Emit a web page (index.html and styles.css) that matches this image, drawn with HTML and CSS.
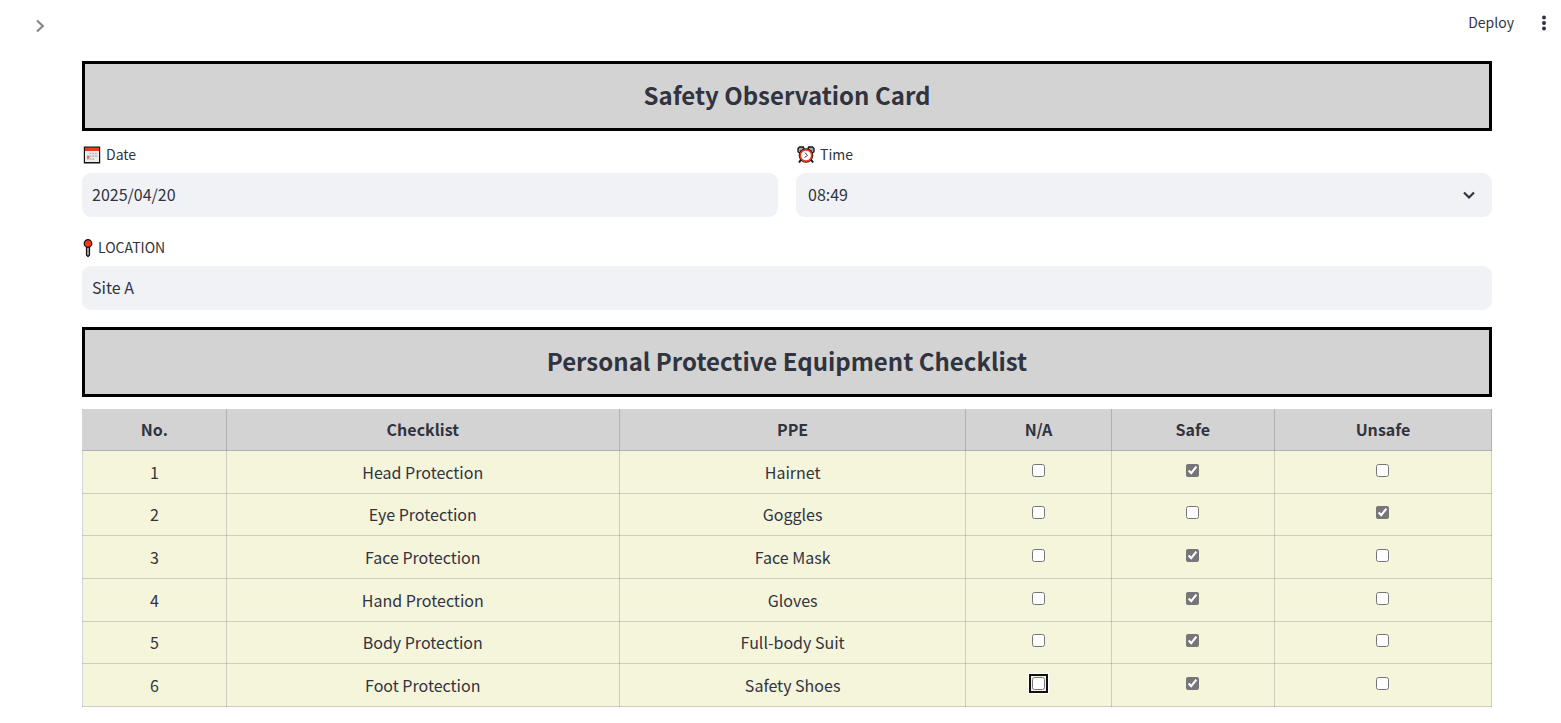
FILE: index.html
```html
<!DOCTYPE html>
<html lang="en">
<head>
<meta charset="utf-8">
<meta name="viewport" content="width=device-width, initial-scale=1">
<title>Safety Observation Card</title>
<link rel="stylesheet" href="styles.css">
</head>
<body>
<header class="topbar">
  <button class="icon-button expand" type="button" aria-label="Open sidebar">
    <svg width="20" height="20" viewBox="0 0 20 20" fill="none" stroke="#85868e" stroke-width="2.2"><path d="M7 4.500 12.800 10 7 15.500"/></svg>
  </button>
  <div class="toolbar">
    <button class="deploy" type="button">Deploy</button>
    <button class="icon-button" type="button" aria-label="Main menu">
      <svg width="20" height="20" viewBox="0 0 20 20" fill="#31333f"><circle cx="10" cy="4.500" r="2"/><circle cx="10" cy="10" r="2"/><circle cx="10" cy="15.500" r="2"/></svg>
    </button>
  </div>
</header>
<main class="page">
  <h1 class="banner">Safety Observation Card</h1>
  <div class="fields">
    <div class="field">
      <label class="label" for="date">
        <svg width="20" height="20" viewBox="0 0 20 20"><path fill="#fff" stroke="#111" stroke-width="1.400" d="M2.500 2.200h15v15.500h-15z"/><path fill="#f03a17" d="M3 2.500h14V6H3z"/><path fill="#ededf0" d="M3 6h14v11H3z"/><path stroke="#b5b5b8" stroke-width="1.700" stroke-dasharray="1.700 1" d="M7.500 8.500H16M5 11.200h11M5 14h8"/><path fill="#ee6a50" d="M5 11h2.500v2.500H5z"/></svg>
        <span class="label-text">Date</span>
      </label>
      <input class="control" id="date" type="text" value="2025/04/20">
    </div>
    <div class="field">
      <label class="label" for="time">
        <svg width="20" height="20" viewBox="0 0 20 20"><path fill="#aaa" stroke="#111" stroke-width="1.300" stroke-linejoin="round" d="M2 7V3.500L3.500 2h4L8 4 4.500 8zM18 7V3.500L16.500 2h-4L12 4l3.500 4z"/><path stroke="#111" stroke-width="2" d="m5.500 14-2.500 3.500M14.500 14l2.500 3.500"/><circle cx="10" cy="10.500" r="7.300" fill="#111"/><circle cx="10" cy="10.500" r="5.700" fill="#fff" stroke="#e63c1e" stroke-width="1.700"/><path fill="none" stroke="#444" d="m9 7.500 2.500 3-3 2"/></svg>
        <span class="label-text">Time</span>
      </label>
      <div class="select-wrap">
        <select class="control select" id="time"><option>08:49</option></select>
        <svg class="chevron" width="20" height="20" viewBox="0 0 20 20" fill="none" stroke="#31333f" stroke-width="2.200"><path d="m5 7.500 5 5 5-5"/></svg>
      </div>
    </div>
    <div class="field wide">
      <label class="label" for="location">
        <svg width="12" height="20" viewBox="0 0 12 20"><path fill="#aaa" stroke="#111" stroke-width="1.200" stroke-linejoin="round" d="M4.500 8h3v9L6 18.500 4.500 17z"/><circle cx="6" cy="5.500" r="3.800" fill="#f03a17" stroke="#111" stroke-width="1.200"/></svg>
        <span class="label-text">LOCATION</span>
      </label>
      <input class="control" id="location" type="text" value="Site A">
    </div>
  </div>
  <h2 class="banner">Personal Protective Equipment Checklist</h2>
  <table class="checklist">
    <colgroup><col class="col-no"><col class="col-item"><col class="col-ppe"><col class="col-na"><col class="col-safe"><col class="col-unsafe"></colgroup>
    <thead>
      <tr><th>No.</th><th>Checklist</th><th>PPE</th><th>N/A</th><th>Safe</th><th>Unsafe</th></tr>
    </thead>
    <tbody>
      <tr><td>1</td><td>Head Protection</td><td>Hairnet</td><td><input class="tick" type="checkbox" aria-label="Head Protection N/A"></td><td><input class="tick" type="checkbox" aria-label="Head Protection safe" checked></td><td><input class="tick" type="checkbox" aria-label="Head Protection unsafe"></td></tr>
      <tr><td>2</td><td>Eye Protection</td><td>Goggles</td><td><input class="tick" type="checkbox" aria-label="Eye Protection N/A"></td><td><input class="tick" type="checkbox" aria-label="Eye Protection safe"></td><td><input class="tick" type="checkbox" aria-label="Eye Protection unsafe" checked></td></tr>
      <tr><td>3</td><td>Face Protection</td><td>Face Mask</td><td><input class="tick" type="checkbox" aria-label="Face Protection N/A"></td><td><input class="tick" type="checkbox" aria-label="Face Protection safe" checked></td><td><input class="tick" type="checkbox" aria-label="Face Protection unsafe"></td></tr>
      <tr><td>4</td><td>Hand Protection</td><td>Gloves</td><td><input class="tick" type="checkbox" aria-label="Hand Protection N/A"></td><td><input class="tick" type="checkbox" aria-label="Hand Protection safe" checked></td><td><input class="tick" type="checkbox" aria-label="Hand Protection unsafe"></td></tr>
      <tr><td>5</td><td>Body Protection</td><td>Full-body Suit</td><td><input class="tick" type="checkbox" aria-label="Body Protection N/A"></td><td><input class="tick" type="checkbox" aria-label="Body Protection safe" checked></td><td><input class="tick" type="checkbox" aria-label="Body Protection unsafe"></td></tr>
      <tr><td>6</td><td>Foot Protection</td><td>Safety Shoes</td><td><input class="tick focused" type="checkbox" aria-label="Foot Protection N/A"></td><td><input class="tick" type="checkbox" aria-label="Foot Protection safe" checked></td><td><input class="tick" type="checkbox" aria-label="Foot Protection unsafe"></td></tr>
    </tbody>
  </table>
</main>
</body>
</html>
```
FILE: styles.css
```css
* { box-sizing: border-box; }

body {
  margin: 0;
  background: #fff;
  color: #31333f;
  font-family: "Noto Sans CJK SC", "Noto Sans", sans-serif;
  font-size: 16px;
  line-height: 24px;
}

button, input, select { font: inherit; color: inherit; }

.topbar {
  display: flex;
  justify-content: space-between;
  align-items: flex-start;
  height: 61px;
  padding: 10px 7px 0 30px;
}

.icon-button, .deploy {
  border: 0;
  padding: 0;
  background: none;
  cursor: pointer;
}

.icon-button { height: 24px; display: flex; align-items: center; }
.expand { margin-top: 4px; }
.toolbar { display: flex; align-items: center; gap: 20px; }
.deploy { font-size: 14px; padding-bottom: 2px; }

.page { padding: 0 69px 16px 82px; }

.banner {
  margin: 0;
  border: 3px solid #000;
  padding: 15px 16px 17px;
  background: #d3d3d3;
  font-size: 24px;
  font-weight: 700;
  line-height: 32px;
  text-align: center;
}

.fields {
  display: grid;
  grid-template-columns: 1fr 1fr;
  gap: 18px;
  padding: 11px 0 17px;
}

.wide { grid-column: 1 / -1; }

.label {
  display: flex;
  align-items: center;
  gap: 4px;
  height: 26px;
  margin-bottom: 5px;
  font-size: 14px;
}

.label-text { padding-bottom: 2px; }

.control {
  display: block;
  width: 100%;
  height: 44px;
  border: 0;
  border-radius: 9px;
  padding: 0 10px 2px;
  background: #f0f2f6;
}

.select-wrap { position: relative; }
.select { appearance: none; padding: 0 12px 2px; }
.chevron { position: absolute; right: 13px; top: 12px; pointer-events: none; }

.checklist {
  width: 100%;
  height: 298px;
  margin-top: 12px;
  border-collapse: collapse;
  table-layout: fixed;
  text-align: center;
}

.col-no { width: 10.2%; }
.col-item { width: 27.9%; }
.col-ppe { width: 24.6%; }
.col-na { width: 10.3%; }
.col-safe { width: 11.6%; }
.col-unsafe { width: 15.4%; }

th, td { padding: 8px; border: 1px solid rgba(49, 51, 63, 0.2); }
th { padding: 7px 8px 9px; background: #d3d3d3; font-weight: 700; }
td { background: #f5f5dc; }

.tick {
  display: block;
  width: 13px;
  height: 13px;
  margin: 0 auto 3px;
  accent-color: #767676;
}

.focused, .tick:focus-visible {
  outline: 2px solid #101010;
  outline-offset: 1px;
  border-radius: 3px;
  box-shadow: 0 0 0 1px #f5f5dc, 0 0 0 4px #fff;
}
```
